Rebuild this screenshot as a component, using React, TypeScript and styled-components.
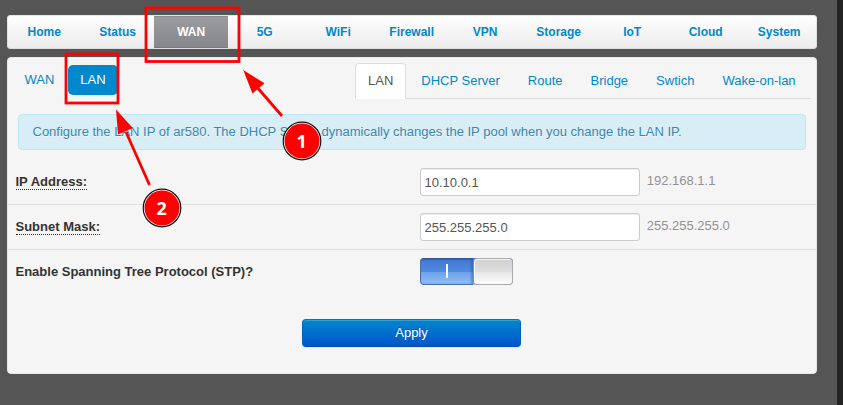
import React from "react";
import styled, { createGlobalStyle, css } from "styled-components";

const GlobalStyle = createGlobalStyle`
  *, *::before, *::after { box-sizing: border-box; }
  html, body, #root { height: 100%; }
  body {
    margin: 0;
    overflow: hidden;
    background: #232323;
    color: #333;
    font: 13px/20px "Liberation Sans", Arial, sans-serif;
  }
`;

const Page = styled.div`
  position: relative;
  display: flex;
  flex-direction: column;
  gap: 8px;
  width: 837px;
  height: 405px;
  padding: 15px 20px 0 7px;
  background: #555;
`;

const NavBar = styled.nav`
  display: grid;
  grid-template-columns: repeat(11, 73.5px);
  height: 34px;
  padding: 1px 0 1px 0.4px;
  border-radius: 4px;
  background: linear-gradient(#fff, #ebebeb);
  box-shadow: inset 0 0 0 1px rgba(210, 210, 210, 0.55);
`;

const NavItem = styled.a<{ $active?: boolean }>`
  display: flex;
  align-items: center;
  justify-content: center;
  color: #0088cc;
  font-size: 12px;
  font-weight: bold;
  ${(p) =>
    p.$active &&
    css`
      color: #fff;
      background: linear-gradient(#9b9da1, #84868a);
      box-shadow: inset 0 1px 0 #8a8c90, inset 0 -1px 0 #77797c;
    `}
`;

const Panel = styled.main`
  height: 317px;
  border: 1px solid #e8e8e8;
  border-radius: 4px;
  background: #f5f5f5;
`;

const SubNav = styled.div`
  display: flex;
  justify-content: space-between;
  height: 41px;
  padding: 5px 5px 0 4.5px;
`;

const Pills = styled.div`
  display: flex;
  gap: 2px;
  padding-top: 2px;
`;

const Pill = styled.a<{ $active?: boolean }>`
  height: 30px;
  padding: 0 12px;
  border-radius: 5px;
  line-height: 29px;
  color: ${(p) => (p.$active ? "#fff" : "#0088cc")};
  background: ${(p) => (p.$active ? "#0088cc" : "transparent")};
`;

const Tabs = styled.div`
  display: flex;
  gap: 2px;
  width: 456px;
  height: 36px;
  border-bottom: 1px solid #ddd;
`;

const Tab = styled.a<{ $active?: boolean }>`
  height: 36px;
  padding: 0 12px;
  border: 1px solid transparent;
  border-radius: 4px 4px 0 0;
  line-height: 34px;
  white-space: nowrap;
  color: #0088cc;
  ${(p) =>
    p.$active &&
    css`
      color: #555;
      background: #fff;
      border-color: #ddd;
      border-bottom-color: #fff;
    `}
`;

const Notice = styled.div`
  height: 36px;
  margin: 15px 10px 10px;
  padding: 0 13.5px;
  border: 1px solid #bce8f1;
  border-radius: 4px;
  background: #d9edf7;
  color: #3a87ad;
  line-height: 34px;
  text-shadow: 0 1px 0 rgba(255, 255, 255, 0.5);
`;

const Row = styled.div<{ $last?: boolean }>`
  display: flex;
  align-items: center;
  height: 45px;
  padding-left: 7.5px;
  border-bottom: 1px solid ${(p) => (p.$last ? "transparent" : "#ddd")};
`;

const LabelCell = styled.div`
  display: flex;
  width: 404.5px;
`;

const Label = styled.label<{ $hint?: boolean }>`
  font-weight: bold;
  line-height: 15px;
  border-bottom: 1px ${(p) => (p.$hint ? "dotted #333" : "solid transparent")};
`;

const Field = styled.input`
  width: 220px;
  height: 28px;
  margin: 0;
  padding: 0 3.5px;
  border: 1px solid #ccc;
  border-radius: 3px;
  background: #fff;
  box-shadow: inset 0 1px 1px rgba(0, 0, 0, 0.075);
  color: #555;
  font: inherit;
`;

const FieldNote = styled.span`
  margin: -3px 0 0 6.7px;
  color: #929292;
`;

const Switch = styled.button`
  display: flex;
  width: 93px;
  height: 27px;
  margin: 0 0 2px;
  padding: 0;
  border: 0;
  border-radius: 4px;
  overflow: hidden;
  background: linear-gradient(#4079d5, #8fbdf8);
`;

const SwitchOn = styled.span`
  display: flex;
  align-items: center;
  justify-content: center;
  width: 53px;
  height: 27px;
  border: 1px solid #4a6fa9;
  border-top-color: #315795;
  border-right: 0;
  border-radius: 4px 0 0 4px;
  background: linear-gradient(#4079d5 0%, #5289df 50%, #6ca1e9 51%, #8fbdf8 100%);
  box-shadow: inset -2px 0 2px rgba(35, 75, 145, 0.4), inset 0 1px 1px rgba(30, 65, 130, 0.35);
`;

const SwitchMark = styled.span`
  width: 2px;
  height: 14px;
  background: #fff;
`;

const SwitchKnob = styled.span`
  width: 40px;
  height: 27px;
  border: 1px solid #aaa;
  border-left-color: #7e90ad;
  border-radius: 4px;
  background: linear-gradient(#cfcfcf 0%, #dedede 50%, #e6e6e6 52%, #fcfcfc 100%);
  box-shadow: inset 1px 1px 0 rgba(255, 255, 255, 0.8);
`;

const Apply = styled.button`
  display: block;
  width: 219px;
  height: 28px;
  margin: 24px 0 0 294px;
  padding: 0 0 1px;
  border: 1px solid;
  border-color: #0077b3 #0062b8 #004eb0;
  border-radius: 4px;
  background: linear-gradient(#0088cc, #0055cc);
  box-shadow: inset 0 1px 0 rgba(255, 255, 255, 0.2), 0 1px 2px rgba(0, 0, 0, 0.05);
  color: #fff;
  font: inherit;
  text-shadow: 0 -1px 0 rgba(0, 0, 0, 0.25);
`;

const Annotations = styled.svg`
  position: absolute;
  top: 0;
  left: 0;
  pointer-events: none;
`;

const StepNumber = styled.text`
  fill: #fff;
  font: bold 18px "Open Sans", "Noto Sans", sans-serif;
  text-anchor: middle;
`;

const sections = ["Home", "Status", "WAN", "5G", "WiFi", "Firewall", "VPN", "Storage", "IoT", "Cloud", "System"];
const tabs = ["LAN", "DHCP Server", "Route", "Bridge", "Swtich", "Wake-on-lan"];
const addresses = [
  { label: "IP Address:", value: "10.10.0.1", note: "192.168.1.1" },
  { label: "Subnet Mask:", value: "255.255.255.0", note: "255.255.255.0" },
];

function Step({ x, y, n }: { x: number; y: number; n: number }) {
  return (
    <g>
      <circle cx={x} cy={y} r="18.8" fill="#fff" stroke="#111" strokeWidth="1.2" />
      <circle cx={x} cy={y} r="17.5" fill="#f00" />
      <StepNumber x={x - 0.3} y={y + 6.5}>{n}</StepNumber>
    </g>
  );
}

export default function App() {
  return (
    <>
      <GlobalStyle />
      <Page>
        <NavBar>
          {sections.map((s) => (
            <NavItem key={s} $active={s === "WAN"}>{s}</NavItem>
          ))}
        </NavBar>
        <Panel>
          <SubNav>
            <Pills>
              <Pill>WAN</Pill>
              <Pill $active>LAN</Pill>
            </Pills>
            <Tabs>
              {tabs.map((t) => (
                <Tab key={t} $active={t === "LAN"}>{t}</Tab>
              ))}
            </Tabs>
          </SubNav>
          <Notice>
            Configure the LAN IP of ar580. The DHCP Server dynamically changes the IP pool when you change the LAN IP.
          </Notice>
          {addresses.map((a) => (
            <Row key={a.label}>
              <LabelCell>
                <Label $hint>{a.label}</Label>
              </LabelCell>
              <Field defaultValue={a.value} />
              <FieldNote>{a.note}</FieldNote>
            </Row>
          ))}
          <Row $last>
            <LabelCell>
              <Label>Enable Spanning Tree Protocol (STP)?</Label>
            </LabelCell>
            <Switch role="switch" aria-checked="true">
              <SwitchOn>
                <SwitchMark />
              </SwitchOn>
              <SwitchKnob />
            </Switch>
          </Row>
          <Apply>Apply</Apply>
        </Panel>
        <Annotations width="837" height="405" viewBox="0 0 837 405">
          <g fill="none" stroke="#f00" strokeWidth="2.8">
            <rect x="146" y="8" width="93" height="53.5" />
            <rect x="66" y="54" width="52" height="49" />
            <path d="M282 116 L256 86 M149.500 185 L126 132" />
          </g>
          <path d="M243.200 70 L264.500 83.300 L252.500 93.500 Z M116 109.500 L132.800 128 L118 134.500 Z" fill="#f00" />
          <Step x={302} y={141} n={1} />
          <Step x={162} y={208} n={2} />
        </Annotations>
      </Page>
    </>
  );
}
